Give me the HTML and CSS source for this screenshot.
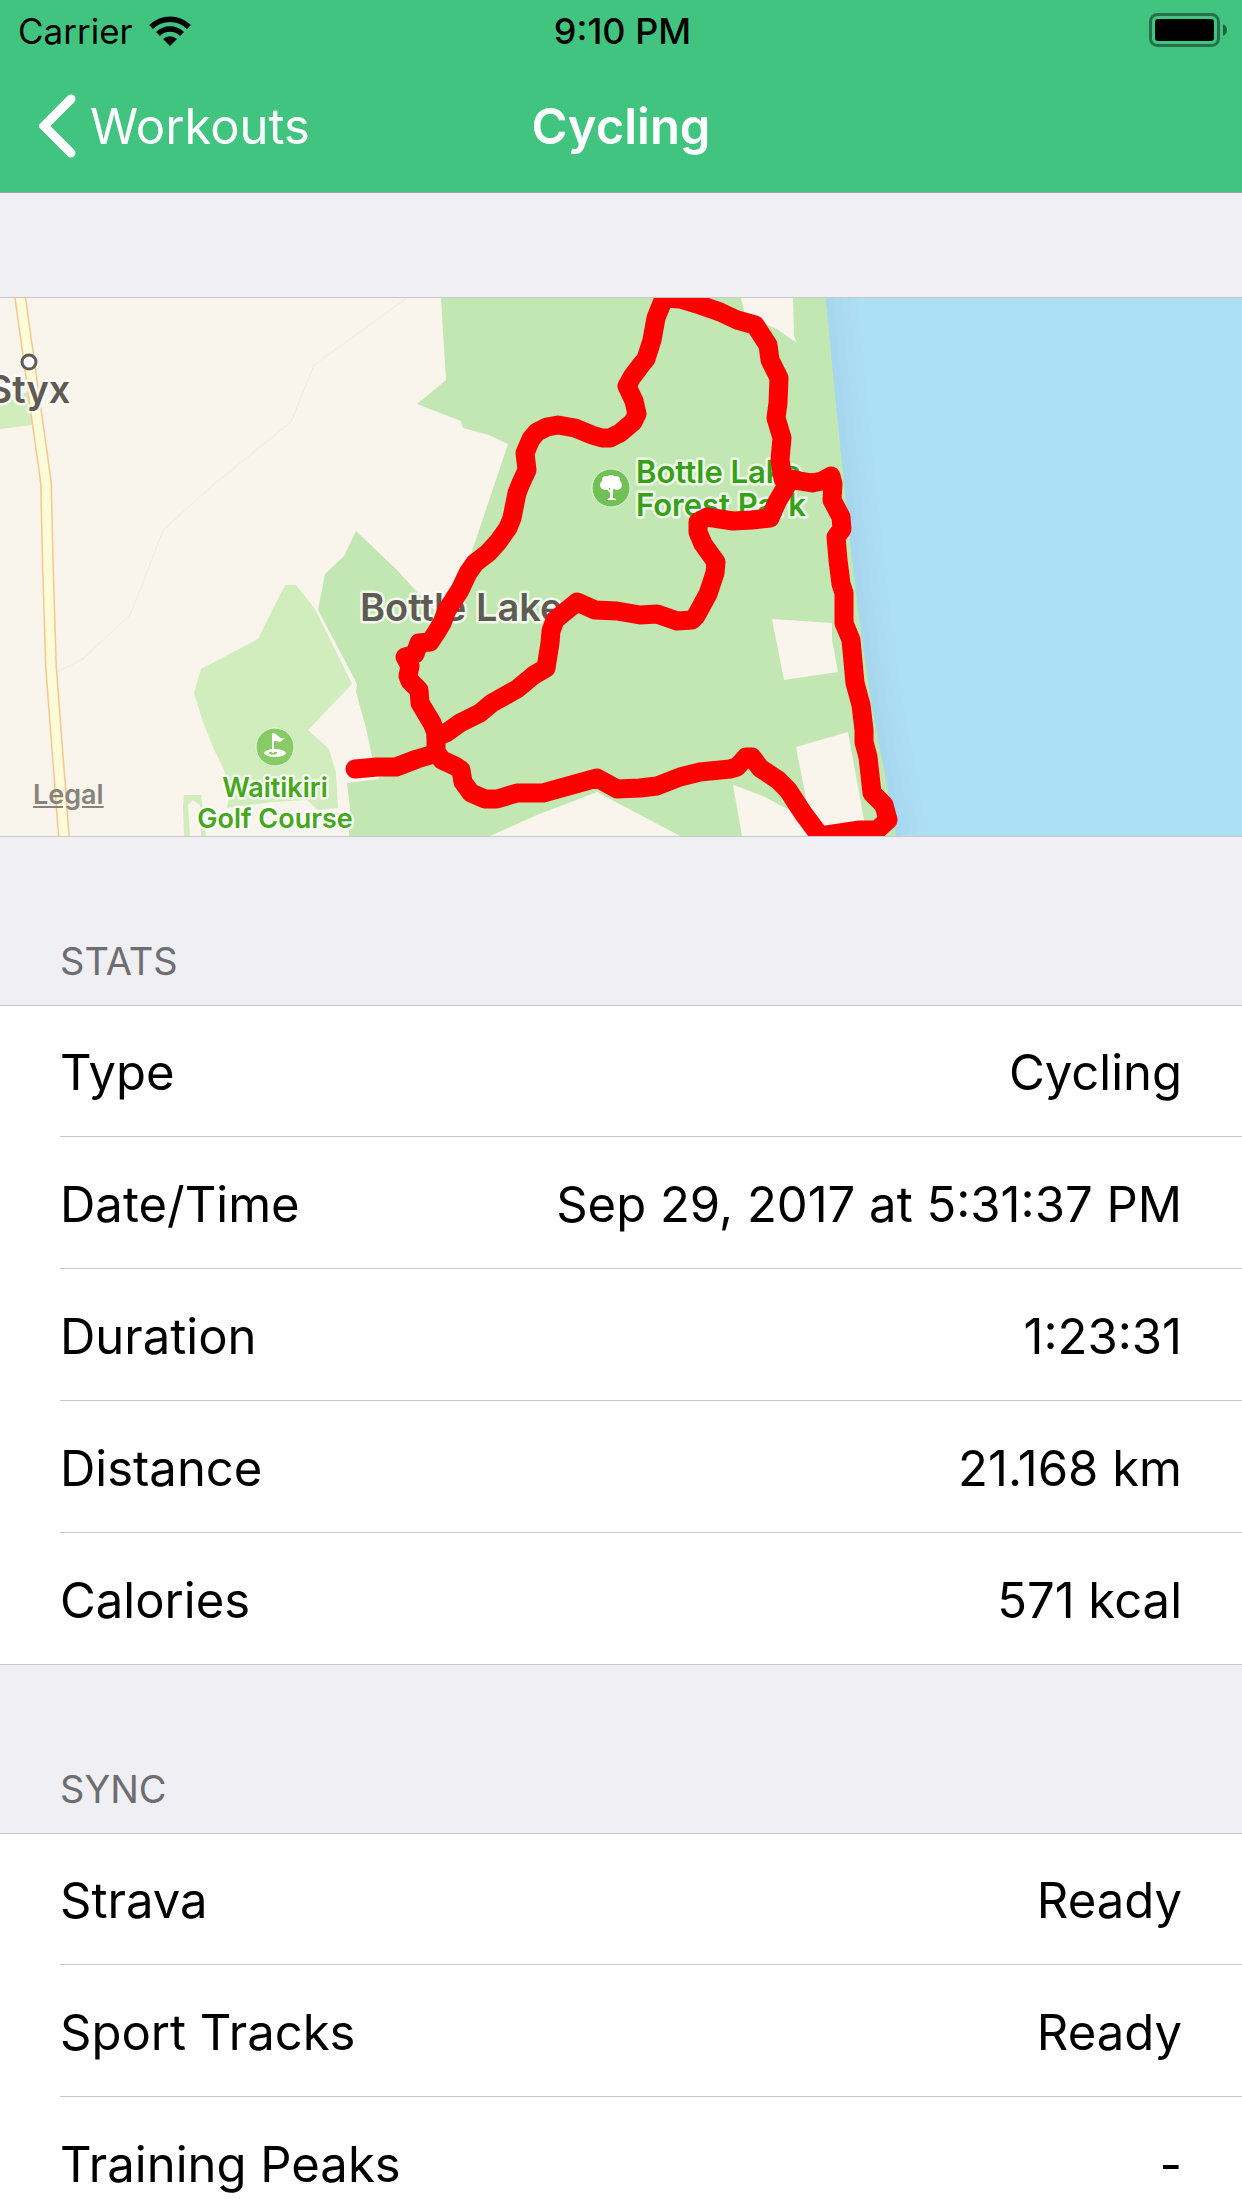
FILE: index.html
```html
<!DOCTYPE html>
<html lang="en">
<head>
    <meta charset="UTF-8">
    <meta name="viewport" content="width=device-width, initial-scale=1.0">
    <title>Cycling</title>
    <link rel="stylesheet" href="styles.css">
</head>
<body>
    <header class="header">
        <div class="status-bar">
            <div class="carrier">
                <span>Carrier</span>
                <svg class="wifi" width="42" height="30" viewBox="0 0 42 30" aria-hidden="true">
                    <path d="M0 9 A30 30 0 0 1 42 9 L38 13 A24 24 0 0 0 4 13 Z"/>
                    <path d="M7 16 A20 20 0 0 1 35 16 L31 20 A14 14 0 0 0 11 20 Z"/>
                    <path d="M14 23 A10 10 0 0 1 28 23 L21 30 Z"/>
                </svg>
            </div>
            <span class="clock">9:10 PM</span>
            <svg class="battery" width="78" height="34" viewBox="0 0 78 34" aria-hidden="true">
                <rect x="1.5" y="1.5" width="68" height="31" rx="7" fill="none" stroke="#000" stroke-opacity="0.42" stroke-width="3"/>
                <rect x="6" y="6" width="59" height="22" rx="3"/>
                <path d="M74 11 Q78 13 78 17 Q78 21 74 23 Z" fill-opacity="0.5"/>
            </svg>
        </div>
        <nav class="nav-bar">
            <a class="back" href="#">
                <svg width="38" height="64" viewBox="0 0 38 64" aria-hidden="true">
                    <path d="M32 5 L5 32 L32 59" fill="none" stroke="#fff" stroke-width="9" stroke-linecap="round"/>
                </svg>
                <span>Workouts</span>
            </a>
            <h1 class="title">Cycling</h1>
        </nav>
    </header>

    <main>
        <section class="map">
            <svg class="map-canvas" viewBox="0 0 1242 538" preserveAspectRatio="xMidYMid slice" role="img" aria-label="Route map">
                <defs>
                    <clipPath id="sea">
                        <path d="M826 0 L832 65 L842 165 L851 252 L859 319 L872 409 L888 492 L896 538 L1242 538 L1242 0 Z"/>
                    </clipPath>
                </defs>

                <!-- land and parks -->
                <rect width="1242" height="538" fill="#f9f4ec"/>
                <path fill="#c3e7b3" d="M441 0 L446 82 L417 106 L461 123 L463 130 L489 137 L508 146 L470 259 L435 313 L417 294 L397 272 L356 233 L344 258 L325 276 L318 312 L354 380 L357 387 L356 394 L366 430 L372 459 L379 481 L347 485 L350 510 L349 538 L900 538 L900 0 Z"/>
                <path fill="#d1edbd" d="M285 287 L296 287 L315 311 L352 386 L308 432 L329 451 L336 475 L338 510 L318 512 L307 502 L273 504 L227 510 L230 495 L224 472 L213 449 L203 424 L194 395 L201 371 L258 341 Z"/>
                <path fill="#d1edbd" d="M0 98 L30 94 L33 127 L0 131 Z"/>
                <path fill="#d1edbd" d="M184 497 L201 497 L206 538 L201 538 L200 507 L193 502 L188 507 L190 538 L184 538 L183 509 Z"/>
                <g fill="#f9f4ec">
                    <path d="M741 0 L745 17 L777 31 L797 45 L794 38 L793 0 Z"/>
                    <path d="M772 321 L832 325 L832 342 L838 374 L784 382 Z"/>
                    <path d="M796 449 L848 434 L864 522 L864 538 L812 538 L805 495 Z"/>
                    <path d="M733 487 L763 498 L793 514 L815 538 L742 538 Z"/>
                    <path d="M490 538 L537 517 L597 494 L680 538 Z"/>
                </g>

                <!-- sea, a little darker along the shore -->
                <g clip-path="url(#sea)">
                    <rect x="820" width="422" height="538" fill="#aee0f5"/>
                    <g fill="none" stroke="#9fd3e9" stroke-opacity="0.15">
                        <path stroke-width="60" d="M827 0 L843 165 L860 319 L873 409 L897 538"/>
                        <path stroke-width="44" d="M827 0 L843 165 L860 319 L873 409 L897 538"/>
                        <path stroke-width="28" d="M827 0 L843 165 L860 319 L873 409 L897 538"/>
                        <path stroke-width="12" d="M827 0 L843 165 L860 319 L873 409 L897 538"/>
                    </g>
                </g>

                <!-- roads -->
                <path fill="none" stroke="#efebe3" stroke-width="1" d="M407 0 L314 67 L291 124 L213 187 L163 232 L148 272 L130 317 L83 361 L57 374"/>
                <path fill="none" stroke="#f8c690" stroke-width="12" d="M20 -2 L46 185 L48 272 L51 369 L64 540"/>
                <path fill="none" stroke="#fdfbd8" stroke-width="9" d="M20 -2 L46 185 L48 272 L51 369 L64 540"/>

                <!-- places -->
                <circle cx="29" cy="64" r="7" fill="#fff" stroke="#5f5b53" stroke-width="3"/>
                <g class="place">
                    <text x="29" y="105" text-anchor="middle">Styx</text>
                    <text x="360" y="323">Bottle Lake</text>
                </g>
                <g class="park">
                    <text x="636" y="185">Bottle Lake</text>
                    <text x="636" y="218">Forest Park</text>
                </g>
                <g class="golf" text-anchor="middle">
                    <text x="275" y="499">Waitikiri</text>
                    <text x="275" y="530">Golf Course</text>
                </g>
                <g>
                    <circle cx="611" cy="190" r="19" fill="#70c055" stroke="#e6f5df" stroke-width="1"/>
                    <g fill="#fff">
                        <circle cx="605" cy="187" r="5"/>
                        <circle cx="617" cy="187" r="5"/>
                        <circle cx="611" cy="181" r="4"/>
                        <circle cx="606" cy="182" r="4"/>
                        <circle cx="616" cy="182" r="4"/>
                        <rect x="606" y="181" width="10" height="9"/>
                        <path d="M606 190 L608 189 L610 193 V189 H615 L613 192 V200 L616 201 V202 H607 V201 L610 200 V195 Z"/>
                    </g>
                </g>
                <g>
                    <circle cx="275" cy="449" r="19" fill="#86cb65" stroke="#edf8e6" stroke-width="1"/>
                    <ellipse cx="275" cy="455" rx="11" ry="4" fill="#fff"/>
                    <ellipse cx="273" cy="455" rx="4" ry="1.5" fill="#86cb65"/>
                    <path fill="#fff" d="M272 435 Q276 435 278 438 Q281 441 285 440 Q282 443 280 444 Q277 443 274 443 V455 H272 Z"/>
                </g>

                <!-- workout route -->
                <g class="route">
                    <path d="M355 471 L377 469 L396 469 L417 461 L434 456 L436 449 L436 435 L432 425 L420 405 L419 392 L410 383 L408 378 L410 368 L405 359 L415 356 L419 345 L430 344 L436 335 L442 325 L447 312 L460 292 L468 275 L475 265 L488 255 L498 244 L508 230 L512 220 L517 195 L521 185 L527 172 L525 155 L531 141 L537 134 L547 129 L558 127 L575 130 L592 137 L602 140 L610 140 L620 135 L633 124 L637 116 L634 103 L627 88 L632 79 L641 67 L646 61 L652 42 L656 20 L664 0 L680 1 L700 7 L720 14 L737 22 L755 27 L768 47 L770 62 L779 80 L778 105 L776 120 L782 140 L780 162 L783 181"/>
                    <path d="M787 180 L800 183 L812 185 L822 183 L831 178 L833 186 L832 202 L841 219 L842 231 L836 239 L838 262 L841 286 L844 295 L844 325 L851 342 L855 385 L861 407 L864 432 L864 444 L868 459 L872 495 L884 507 L888 522 L877 532 L860 532 L820 538 L803 515 L788 492 L778 482 L760 470 L752 459 L746 459 L737 469 L730 471 L700 474 L680 479 L657 488 L640 490 L617 491 L608 486 L597 480 L543 495 L517 495 L497 501 L485 501 L471 495 L463 484 L461 472 L455 468 L442 462 L436 454"/>
                    <path d="M436 439 L446 435 L460 425 L480 415 L492 405 L517 391 L534 377 L546 370 L550 345 L551 333 L555 322 L577 304 L595 312 L617 313 L640 317 L657 316 L677 323 L692 322 L696 318 L708 296 L715 275 L716 264 L703 246 L698 234 L698 224 L707 219 L733 223 L752 222 L770 220 L777 204 L787 187"/>
                </g>
            </svg>
            <a class="legal" href="#">Legal</a>
        </section>

        <section>
            <h2 class="section-title">STATS</h2>
            <dl class="group">
                <div class="row"><dt>Type</dt><dd>Cycling</dd></div>
                <div class="row"><dt>Date/Time</dt><dd>Sep 29, 2017 at 5:31:37 PM</dd></div>
                <div class="row"><dt>Duration</dt><dd>1:23:31</dd></div>
                <div class="row"><dt>Distance</dt><dd>21.168 km</dd></div>
                <div class="row"><dt>Calories</dt><dd>571 kcal</dd></div>
            </dl>
        </section>

        <section>
            <h2 class="section-title">SYNC</h2>
            <dl class="group">
                <div class="row"><dt>Strava</dt><dd>Ready</dd></div>
                <div class="row"><dt>Sport Tracks</dt><dd>Ready</dd></div>
                <div class="row"><dt>Training Peaks</dt><dd>-</dd></div>
            </dl>
        </section>
    </main>
</body>
</html>
```

FILE: styles.css
```css
* {
    box-sizing: border-box;
}
body {
    margin: 0;
    font-family: Inter, "Liberation Sans", sans-serif;
    font-size: 49px;
    background: #efeff4;
    color: #000;
}
.header {
    background: #40c480;
    border-bottom: 1px solid #a3a3ab;
}
.status-bar {
    display: grid;
    grid-template-columns: 1fr auto 1fr;
    align-items: center;
    height: 60px;
    padding: 2px 15px 0 18px;
    font-size: 35px;
}
.carrier {
    display: flex;
    align-items: center;
    gap: 16px;
}
.clock {
    font-size: 36px;
    font-weight: 500;
}
.battery {
    justify-self: end;
    margin-bottom: 2px;
}
.nav-bar {
    display: grid;
    grid-template-columns: 1fr auto 1fr;
    align-items: center;
    height: 132px;
    padding: 0 39px;
    color: #fff;
}
.back {
    display: flex;
    align-items: center;
    gap: 13px;
    color: inherit;
    text-decoration: none;
}
.title {
    margin: 0;
    font-size: 49px;
    font-weight: 600;
}
.map {
    position: relative;
    margin-top: 104px;
    border-top: 1px solid #c8c7cc;
    border-bottom: 1px solid #c8c7cc;
}
.map-canvas {
    display: block;
    width: 100%;
}
.map-canvas text {
    paint-order: stroke;
    stroke: #fff;
    stroke-opacity: 0.75;
    stroke-width: 5px;
    stroke-linejoin: round;
    font-weight: 600;
}
.place {
    font-size: 38px;
    fill: #5f5b53;
}
.park {
    font-size: 31px;
    fill: #35a114;
}
.golf {
    font-size: 27px;
    fill: #46a71c;
}
.route {
    fill: none;
    stroke: #f00;
    stroke-width: 19px;
    stroke-linecap: round;
    stroke-linejoin: round;
}
.legal {
    position: absolute;
    left: 33px;
    bottom: 25px;
    font-size: 27px;
    font-weight: 600;
    color: #85837d;
}
.section-title {
    display: flex;
    align-items: flex-end;
    height: 168px;
    margin: 0;
    padding: 0 60px 21px;
    font-size: 38px;
    font-weight: 400;
    color: #6d6d72;
}
.group {
    margin: 0;
    padding-left: 60px;
    background: #fff;
    box-shadow: inset 0 1px #c8c7cc, inset 0 -1px #c8c7cc;
}
.row {
    display: flex;
    align-items: center;
    justify-content: space-between;
    height: 132px;
    padding: 3px 60px 0 0;
    border-bottom: 1px solid #c8c7cc;
}
.row:last-child {
    border-bottom: none;
}
.row dd {
    margin: 0;
}
```
